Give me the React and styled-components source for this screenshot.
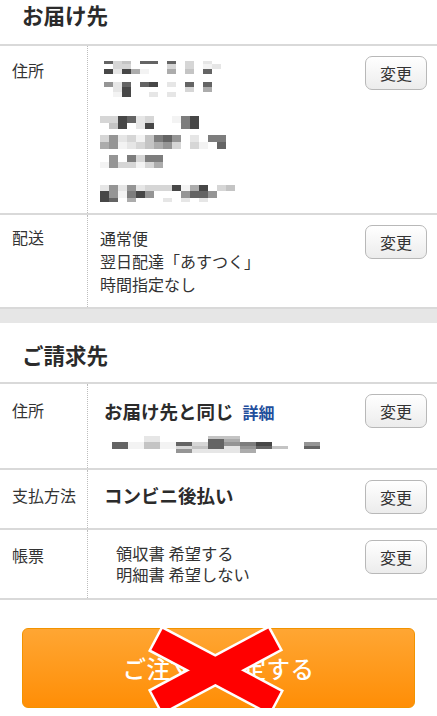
import styled, { createGlobalStyle } from 'styled-components';

const GlobalStyle = createGlobalStyle`
    body {
        margin: 0;
        background: #fff;
        color: #333;
        font-family: "Noto Sans CJK JP", "Noto Sans", sans-serif;
    }
`

const shades = {
    '0': 'transparent', '1': '#f3f3f3', '2': '#e6e6e6', '3': '#d6d6d6', '4': '#c4c4c4',
    '5': '#acacac', '6': '#959595', '7': '#7d7d7d', '8': '#646464', '9': '#474747',
}

// blurred (mosaic) address blocks
const blockA = [
    [3, '8340880803020'],
    [5, '0330000303012'],
    [5, '9295100504080'],
    [8, '0000000000000'],
    [5, '6280890208080'],
    [5, '0290000003050'],
    [5, '0190020200000'],
]
const blockB = [
    [7, '33982300179'],
    [6, '04902900079'],
    [6, '00000000000'],
    [7, '36231478602077'],
    [7, '56123456303108'],
    [6, '00000000000'],
    [7, '0607377'],
    [6, '1633135'],
]
const blockC = [
    [6, '262623339159034'],
    [7, '961796000688600'],
    [4, '980500020202000'],
]
const blockBill = [
    [3, '0020004400000'],
    [3, '0020008500000'],
    [4, '8141838679006'],
    [3, '8141348268408'],
    [4, '0000622250000'],
]

const Page = styled.div`
    width: 437px;
    overflow: hidden;
`

const SectionTitle = styled.h2`
    margin: 0;
    height: ${p => p.$first ? '44px' : '42px'};
    padding: ${p => p.$first ? '0' : '17px'} 0 0 22px;
    font-size: 21.5px;
    font-weight: 700;
    line-height: 30px;
    color: #2b2b2b;
`

const Table = styled.div`
    border-top: 2px solid #d9d9d9;
`

const Row = styled.div`
    display: grid;
    grid-template-columns: 88px 1fr auto;
    min-height: ${p => p.$h}px;
    border-bottom: 2px solid #d9d9d9;
`

const Label = styled.div`
    border-right: 1px dotted #bdbdbd;
    padding: ${p => p.$pad}px 0 0 12px;
    font-size: 16px;
    line-height: 23px;
    color: #333;
`

const Content = styled.div`
    padding: ${p => p.$pad}px 0 0 12px;
    font-size: 16px;
    line-height: 23px;
`

const ChangeCell = styled.div`
    padding: 10px 10px 0 0;
`

const ChangeButton = styled.button`
    width: 62px;
    height: 34px;
    padding: 0;
    border: 1px solid #b8b8b8;
    border-radius: 7px;
    background: linear-gradient(#ffffff, #ececec);
    font-family: inherit;
    font-size: 16px;
    color: #333;
`

const MosaicBox = styled.div`
    margin: ${p => p.$top}px 0 0 ${p => p.$left}px;
`

const MosaicRow = styled.div`
    display: flex;
    height: ${p => p.$h}px;
`

const Cell = styled.span`
    flex: none;
    width: ${p => p.$w}px;
    background: ${p => shades[p.$s]};
`

const GreyBand = styled.div`
    height: 14px;
    background: #e6e6e6;
`

const Strong = styled.div`
    padding-left: ${p => p.$indent || 2}px;
    font-size: 18.5px;
    font-weight: 700;
    line-height: 24px;
    color: #2b2b2b;
`

const DetailLink = styled.a`
    margin-left: 9px;
    font-size: 16px;
    font-weight: 700;
    color: #1f4e9c;
    text-decoration: none;
`

const SmallLines = styled.div`
    padding-left: 16px;
    font-size: 16.3px;
    line-height: 21px;
    color: #333;
`

const SubmitWrap = styled.div`
    position: relative;
    margin: 28px 22px 0;
`

const SubmitButton = styled.button`
    display: block;
    width: 100%;
    height: 80px;
    border: 1px solid #f29300;
    border-radius: 6px;
    background: linear-gradient(#ffa633, #ff8e06);
    color: #fff;
    font-family: inherit;
    font-size: 23.5px;
    font-weight: 500;
    letter-spacing: 0.5px;
`

const Cross = styled.svg`
    position: absolute;
    left: 118px;
    top: -12px;
    overflow: visible;
    pointer-events: none;
`

function Mosaic({ rows, w, top = 0, left = 0 }) {
    return (
        <MosaicBox $top={top} $left={left}>
            {rows.map(([h, cells], i) => (
                <MosaicRow key={i} $h={h}>
                    {cells.split('').map((s, j) => <Cell key={j} $w={w} $s={s} />)}
                </MosaicRow>
            ))}
        </MosaicBox>
    )
}

const arm1 = '11.4,34.1 22.6,12.9 140.6,75.4 129.4,96.6'
const arm2 = '22.6,96.1 11.3,74.9 128.3,12.4 139.7,33.6'

function App() {
    return (
        <Page>
            <GlobalStyle />
            <SectionTitle $first>お届け先</SectionTitle>
            <Table>
                <Row $h={167}>
                    <Label $pad={13}>住所</Label>
                    <Content $pad={13}>
                        <Mosaic rows={blockA} w={9} top={2} left={4} />
                        <Mosaic rows={blockB} w={9} top={19} />
                        <Mosaic rows={blockC} w={9} top={17} />
                    </Content>
                    <ChangeCell><ChangeButton>変更</ChangeButton></ChangeCell>
                </Row>
                <Row $h={92}>
                    <Label $pad={11}>配送</Label>
                    <Content $pad={12}>
                        通常便<br />
                        翌日配達「あすつく」<br />
                        時間指定なし
                    </Content>
                    <ChangeCell><ChangeButton>変更</ChangeButton></ChangeCell>
                </Row>
            </Table>
            <GreyBand />
            <SectionTitle>ご請求先</SectionTitle>
            <Table>
                <Row $h={84}>
                    <Label $pad={15}>住所</Label>
                    <Content $pad={15}>
                        <Strong $indent={4}>
                            お届け先と同じ<DetailLink href="#">詳細</DetailLink>
                        </Strong>
                        <Mosaic rows={blockBill} w={16} top={12} left={12} />
                    </Content>
                    <ChangeCell><ChangeButton>変更</ChangeButton></ChangeCell>
                </Row>
                <Row $h={58}>
                    <Label $pad={14}>支払方法</Label>
                    <Content $pad={13}>
                        <Strong $indent={4}>コンビニ後払い</Strong>
                    </Content>
                    <ChangeCell><ChangeButton>変更</ChangeButton></ChangeCell>
                </Row>
                <Row $h={68}>
                    <Label $pad={14}>帳票</Label>
                    <Content $pad={13}>
                        <SmallLines>
                            領収書 希望する<br />
                            明細書 希望しない
                        </SmallLines>
                    </Content>
                    <ChangeCell><ChangeButton>変更</ChangeButton></ChangeCell>
                </Row>
            </Table>
            <SubmitWrap>
                <SubmitButton>ご注文を確定する</SubmitButton>
                <Cross width="150" height="101" viewBox="0 0 150 101">
                    <polygon points={arm1} fill="#fff" stroke="#fff" strokeWidth="5" />
                    <polygon points={arm2} fill="#fff" stroke="#fff" strokeWidth="5" />
                    <polygon points={arm1} fill="#ff0000" />
                    <polygon points={arm2} fill="#ff0000" />
                </Cross>
            </SubmitWrap>
        </Page>
    )
}

export default App;
